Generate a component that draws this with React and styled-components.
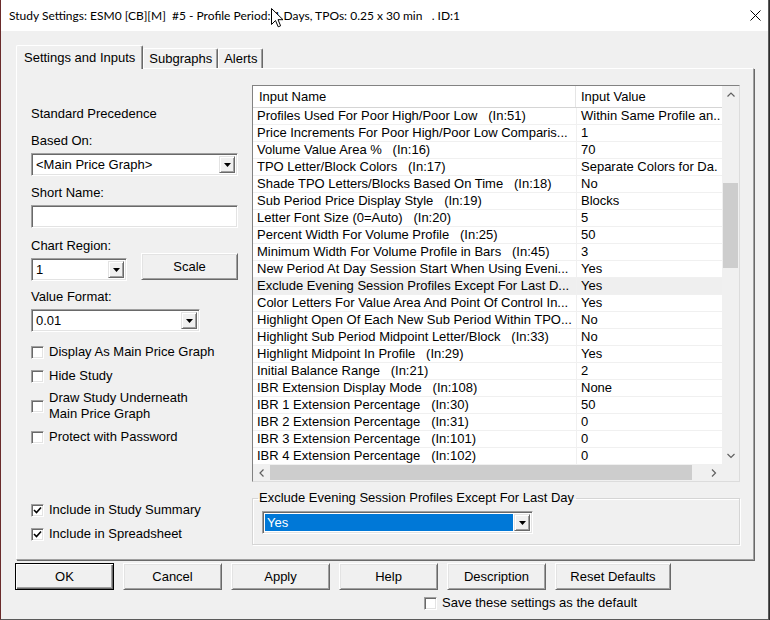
import React from 'react'
import styled, { createGlobalStyle } from 'styled-components'

const GlobalStyle = createGlobalStyle`
  html, body { margin: 0; padding: 0; background: #2e2e2e; }
  body { font-family: "Liberation Sans", Arial, sans-serif; font-size: 13px; color: #000; }
  * { box-sizing: border-box; }
`

const rows = [
  ['Profiles Used For Poor High/Poor Low   (In:51)', 'Within Same Profile an..'],
  ['Price Increments For Poor High/Poor Low Comparis...', '1'],
  ['Volume Value Area %   (In:16)', '70'],
  ['TPO Letter/Block Colors   (In:17)', 'Separate Colors for Da.'],
  ['Shade TPO Letters/Blocks Based On Time   (In:18)', 'No'],
  ['Sub Period Price Display Style   (In:19)', 'Blocks'],
  ['Letter Font Size (0=Auto)   (In:20)', '5'],
  ['Percent Width For Volume Profile   (In:25)', '50'],
  ['Minimum Width For Volume Profile in Bars   (In:45)', '3'],
  ['New Period At Day Session Start When Using Eveni...', 'Yes'],
  ['Exclude Evening Session Profiles Except For Last D...', 'Yes'],
  ['Color Letters For Value Area And Point Of Control In...', 'Yes'],
  ['Highlight Open Of Each New Sub Period Within TPO...', 'No'],
  ['Highlight Sub Period Midpoint Letter/Block   (In:33)', 'No'],
  ['Highlight Midpoint In Profile   (In:29)', 'Yes'],
  ['Initial Balance Range   (In:21)', '2'],
  ['IBR Extension Display Mode   (In:108)', 'None'],
  ['IBR 1 Extension Percentage   (In:30)', '50'],
  ['IBR 2 Extension Percentage   (In:31)', '0'],
  ['IBR 3 Extension Percentage   (In:101)', '0'],
  ['IBR 4 Extension Percentage   (In:102)', '0'],
]

const buttons = [
  ['OK', 99, true],
  ['Cancel', 99],
  ['Apply', 99],
  ['Help', 99],
  ['Description', 99],
  ['Reset Defaults', 116],
]

const DownTriangle = () => (
  <svg width="7" height="4" viewBox="0 0 7 4">
    <polygon points="0,0 7,0 3.5,4" fill="#000" />
  </svg>
)

const Chevron = ({ dir }) => {
  const pts = {
    up: '0.5,4.5 4,1 7.5,4.5',
    down: '0.5,1 4,4.5 7.5,1',
    left: '4.5,0.5 1,4 4.5,7.5',
    right: '1,0.5 4.5,4 1,7.5',
  }[dir]
  const horiz = dir === 'left' || dir === 'right'
  return (
    <svg width={horiz ? 6 : 8} height={horiz ? 8 : 6} viewBox={horiz ? '0 0 6 8' : '0 0 8 6'}>
      <polyline points={pts} fill="none" stroke="#606060" strokeWidth="1.2" />
    </svg>
  )
}

const CheckMark = () => (
  <svg width="9" height="9" viewBox="0 0 9 9">
    <polyline points="1,4 3.5,6.5 8,1.5" fill="none" stroke="#000" strokeWidth="1.6" />
  </svg>
)

const Checkbox = ({ checked, children, mt, ml }) => (
  <CheckRow $mt={mt} $ml={ml}>
    <CheckBox>{checked && <CheckMark />}</CheckBox>
    <span>{children}</span>
  </CheckRow>
)

const Combo = ({ width, value, selected }) => (
  <ComboBox $w={width}>
    <ComboText $selected={selected}>{value}</ComboText>
    <ComboButton>
      <DownTriangle />
    </ComboButton>
  </ComboBox>
)

const App = () => (
  <>
    <GlobalStyle />
    <Window>
      <TitleBar>
        <TitleText>Study Settings: ESM0 [CB][M]  #5 - Profile Period: 1 Days, TPOs: 0.25 x 30 min   . ID:1</TitleText>
        <CloseIcon width="11" height="11" viewBox="0 0 11 11">
          <path d="M0.5,0.5 L10.5,10.5 M10.5,0.5 L0.5,10.5" stroke="#000" strokeWidth="1" />
        </CloseIcon>
      </TitleBar>
      <Cursor width="13" height="20" viewBox="0 0 13 20">
        <path d="M0.5,0.5 L0.5,16.5 L4.5,12.5 L7.2,18.8 L9.6,17.8 L7,11.7 L12,11.7 Z" fill="#fff" stroke="#000" strokeWidth="1" />
      </Cursor>
      <Body>
        <TabStrip>
          <Tab $active>Settings and Inputs</Tab>
          <Tab>Subgraphs</Tab>
          <Tab>Alerts</Tab>
        </TabStrip>
        <Panel>
          <LeftColumn>
            <Label $mt={21}>Standard Precedence</Label>
            <Label $mt={11}>Based On:</Label>
            <Spacer $h={4} />
            <Combo width={207} value="<Main Price Graph>" />
            <Label $mt={9}>Short Name:</Label>
            <Spacer $h={4} />
            <TextInput />
            <Label $mt={10}>Chart Region:</Label>
            <RegionRow>
              <ComboHolder>
                <Combo width={96} value="1" />
              </ComboHolder>
              <Button $w={97} $h={27}>Scale</Button>
            </RegionRow>
            <Label $mt={8}>Value Format:</Label>
            <Spacer $h={4} />
            <Combo width={169} value="0.01" />
            <Checkbox mt={12}>Display As Main Price Graph</Checkbox>
            <Checkbox mt={8}>Hide Study</Checkbox>
            <Checkbox mt={6}>
              Draw Study Underneath
              <br />
              Main Price Graph
            </Checkbox>
            <Checkbox mt={7}>Protect with Password</Checkbox>
            <Checkbox mt={57} checked>Include in Study Summary</Checkbox>
            <Checkbox mt={8} checked>Include in Spreadsheet</Checkbox>
          </LeftColumn>
          <RightColumn>
            <ListFrame>
              <Viewport>
                <HeaderRow>
                  <HeaderCell $name>Input Name</HeaderCell>
                  <HeaderCell>Input Value</HeaderCell>
                </HeaderRow>
                {rows.map(([name, value], i) => (
                  <Row key={i} $hl={i === 10}>
                    <NameCell>{name}</NameCell>
                    <ValueCell>{value}</ValueCell>
                  </Row>
                ))}
              </Viewport>
              <VScroll>
                <ArrowBox><Chevron dir="up" /></ArrowBox>
                <VTrack>
                  <VThumb />
                </VTrack>
                <ArrowBox><Chevron dir="down" /></ArrowBox>
              </VScroll>
              <HScroll>
                <ArrowBox><Chevron dir="left" /></ArrowBox>
                <HTrack>
                  <HThumb />
                </HTrack>
                <ArrowBox><Chevron dir="right" /></ArrowBox>
              </HScroll>
              <Corner />
            </ListFrame>
            <GroupBox>
              <Legend>Exclude Evening Session Profiles Except For Last Day</Legend>
              <GroupInner>
                <Combo width={271} value="Yes" selected />
              </GroupInner>
            </GroupBox>
          </RightColumn>
        </Panel>
        <ButtonRow>
          {buttons.map(([label, w, def]) => (
            <Button key={label} $w={w} $default={def}>{label}</Button>
          ))}
        </ButtonRow>
        <Checkbox mt={5} ml={408}>Save these settings as the default</Checkbox>
      </Body>
    </Window>
  </>
)

const Window = styled.div`
  position: relative;
  width: 769px;
  height: 620px;
  background: #f0f0f0;
  border-left: 1px solid #6a2b2b;
  border-right: 1px solid #5a5a5a;
  border-bottom: 1px solid #5a5a5a;
  display: flex;
  flex-direction: column;
  overflow: hidden;
`

const TitleBar = styled.div`
  height: 31px;
  flex: none;
  background: #fff;
  display: flex;
  align-items: center;
  padding-left: 8px;
`

const TitleText = styled.div`
  font-family: Lato, "Noto Sans", sans-serif;
  font-size: 12px;
  white-space: pre;
  color: #000;
`

const CloseIcon = styled.svg`
  margin-left: auto;
  margin-right: 7px;
`

const Cursor = styled.svg`
  position: absolute;
  left: 270px;
  top: 8px;
`

const Body = styled.div`
  flex: 1;
  display: flex;
  flex-direction: column;
  padding: 14px 0 0 15px;
`

const TabStrip = styled.div`
  display: flex;
  align-items: flex-end;
  height: 23px;
  position: relative;
  z-index: 1;
`

const Tab = styled.div`
  height: ${p => (p.$active ? 24 : 20)}px;
  margin-bottom: ${p => (p.$active ? -1 : 0)}px;
  padding: 0 ${p => (p.$active ? 7 : 5)}px ${p => (p.$active ? 1 : 0)}px;
  background: #f0f0f0;
  border-top: 1px solid #fff;
  border-left: 1px solid #fff;
  border-right: 1px solid #696969;
  box-shadow: inset -1px 0 0 #a0a0a0;
  border-radius: 2px 2px 0 0;
  display: flex;
  align-items: center;
  white-space: nowrap;
`

const Panel = styled.div`
  width: 738px;
  height: 492px;
  border-top: 1px solid #fff;
  border-left: 1px solid #fff;
  border-right: 1px solid #a0a0a0;
  border-bottom: 1px solid #a0a0a0;
  box-shadow: 1px 1px 0 #696969;
  display: flex;
  gap: 14px;
  padding: 16px 0 0 14px;
`

const LeftColumn = styled.div`
  width: 207px;
  display: flex;
  flex-direction: column;
`

const RightColumn = styled.div`
  width: 488px;
  display: flex;
  flex-direction: column;
`

const Label = styled.div`
  line-height: 16px;
  margin-top: ${p => p.$mt || 0}px;
  white-space: nowrap;
`

const Spacer = styled.div`
  height: ${p => p.$h}px;
  flex: none;
`

const sunken = `
  border: 1px solid;
  border-color: #a0a0a0 #fff #fff #a0a0a0;
  box-shadow: inset 1px 1px 0 #696969, inset -1px -1px 0 #e3e3e3;
  background: #fff;
`

const ComboBox = styled.div`
  ${sunken}
  width: ${p => p.$w}px;
  height: 23px;
  flex: none;
  display: flex;
  padding: 2px;
`

const ComboText = styled.div`
  flex: 1;
  display: flex;
  align-items: center;
  padding-left: 2px;
  margin-right: 1px;
  white-space: nowrap;
  overflow: hidden;
  background: ${p => (p.$selected ? '#0078d7' : 'transparent')};
  color: ${p => (p.$selected ? '#fff' : '#000')};
`

const ComboButton = styled.div`
  width: 16px;
  background: #f0f0f0;
  border: 1px solid;
  border-color: #e3e3e3 #696969 #696969 #e3e3e3;
  box-shadow: inset 1px 1px 0 #fff, inset -1px -1px 0 #a0a0a0;
  display: flex;
  align-items: center;
  justify-content: center;
`

const TextInput = styled.div`
  ${sunken}
  width: 207px;
  height: 23px;
  flex: none;
`

const RegionRow = styled.div`
  display: flex;
  justify-content: space-between;
  align-items: flex-start;
  margin-top: -1px;
`

const ComboHolder = styled.div`
  padding-top: 5px;
`

const CheckRow = styled.div`
  display: flex;
  align-items: center;
  gap: 5px;
  line-height: 16px;
  margin-top: ${p => p.$mt || 0}px;
  margin-left: ${p => p.$ml || 0}px;
  white-space: nowrap;
`

const CheckBox = styled.div`
  ${sunken}
  width: 13px;
  height: 13px;
  flex: none;
  display: flex;
  align-items: center;
  justify-content: center;
`

const ListFrame = styled.div`
  height: 397px;
  border: 1px solid;
  border-color: #828282 #dcdcdc #dcdcdc #828282;
  background: #fff;
  display: grid;
  grid-template-columns: 469px 17px;
  grid-template-rows: 378px 17px;
`

const Viewport = styled.div`
  overflow: hidden;
`

const HeaderRow = styled.div`
  display: flex;
  height: 22px;
  border-bottom: 1px solid #d5d5d5;
`

const HeaderCell = styled.div`
  width: ${p => (p.$name ? '323px' : 'auto')};
  flex: ${p => (p.$name ? 'none' : '1')};
  padding-left: ${p => (p.$name ? 6 : 5)}px;
  border-right: ${p => (p.$name ? '1px solid #e5e5e5' : 'none')};
  display: flex;
  align-items: center;
  white-space: nowrap;
`

const Row = styled.div`
  display: flex;
  height: 17px;
  border-bottom: 1px solid #f0f0f0;
  background: ${p => (p.$hl ? '#efefef' : '#fff')};
`

const NameCell = styled.div`
  width: 324px;
  flex: none;
  padding-left: 4px;
  border-right: 1px solid #f0f0f0;
  line-height: 16px;
  white-space: pre;
  overflow: hidden;
`

const ValueCell = styled.div`
  flex: 1;
  padding-left: 4px;
  line-height: 16px;
  white-space: pre;
  overflow: hidden;
`

const VScroll = styled.div`
  background: #f0f0f0;
  display: flex;
  flex-direction: column;
`

const ArrowBox = styled.div`
  width: 17px;
  height: 17px;
  flex: none;
  display: flex;
  align-items: center;
  justify-content: center;
`

const VTrack = styled.div`
  flex: 1;
  padding: 80px 1px 0;
`

const VThumb = styled.div`
  height: 85px;
  background: #cdcdcd;
`

const HScroll = styled.div`
  background: #f0f0f0;
  display: flex;
`

const HTrack = styled.div`
  flex: 1;
  padding: 1px 0;
`

const HThumb = styled.div`
  width: 422px;
  height: 100%;
  background: #cdcdcd;
`

const Corner = styled.div`
  background: #f0f0f0;
`

const GroupBox = styled.fieldset`
  margin: 8px 0 0;
  padding: 0;
  min-width: 0;
  height: 55px;
  border: 1px solid #d5d5d5;
  box-shadow: inset 1px 1px 0 #fff, 1px 1px 0 #fff;
`

const Legend = styled.legend`
  margin-left: 5px;
  padding: 0 2px 0 1px;
  line-height: 16px;
  white-space: nowrap;
`

const GroupInner = styled.div`
  padding: 5px 0 0 9px;
`

const ButtonRow = styled.div`
  display: flex;
  gap: 9px;
  margin: 3px 0 0 -1px;
`

const Button = styled.button`
  width: ${p => p.$w}px;
  height: ${p => p.$h || 27}px;
  flex: none;
  padding: 0;
  font-family: "Liberation Sans", Arial, sans-serif;
  font-size: 13px;
  color: #000;
  background: #f0f0f0;
  border: 1px solid;
  border-color: ${p => (p.$default ? '#000' : '#fff #696969 #696969 #fff')};
  box-shadow: ${p =>
    p.$default
      ? 'inset 1px 1px 0 #fff, inset -1px -1px 0 #696969, inset -2px -2px 0 #a0a0a0'
      : 'inset 1px 1px 0 #e3e3e3, inset -1px -1px 0 #a0a0a0'};
`

export default App
